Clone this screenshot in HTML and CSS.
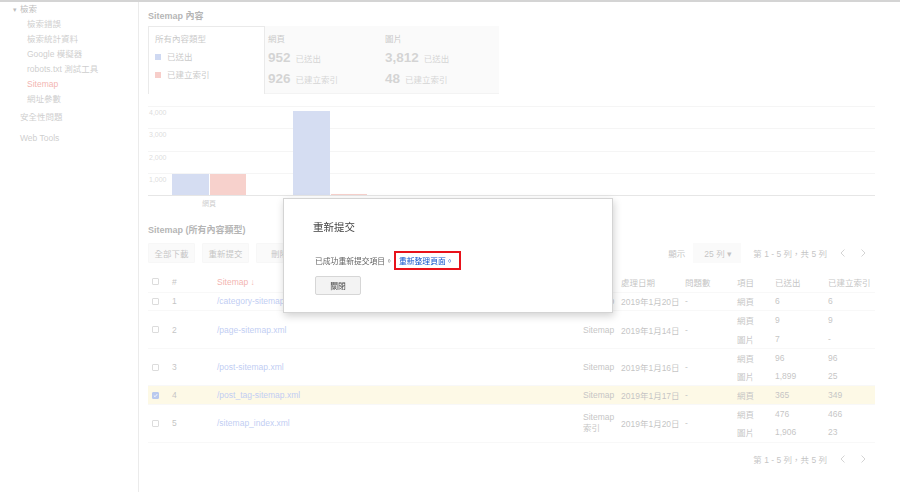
FILE: index.html
```html
<!DOCTYPE html>
<html lang="zh-Hant">
<head>
<meta charset="utf-8">
<title>Sitemap</title>
<link rel="stylesheet" href="styles.css">
</head>
<body>
<div class="topbar"></div>
<div class="layout">
  <nav class="sidebar">
    <div class="nav-head"><span class="caret">▾</span>檢索</div>
    <ul class="nav-sub">
      <li>檢索錯誤</li>
      <li>檢索統計資料</li>
      <li>Google 模擬器</li>
      <li>robots.txt 測試工具</li>
      <li class="active">Sitemap</li>
      <li>網址參數</li>
    </ul>
    <div class="nav-item">安全性問題</div>
    <div class="nav-item web">Web Tools</div>
  </nav>

  <main class="main">
    <h2 class="section-title">Sitemap 內容</h2>
    <div class="summary">
      <div class="legend">
        <div class="legend-row">所有內容類型</div>
        <div class="legend-row"><span class="swatch blue"></span>已送出</div>
        <div class="legend-row"><span class="swatch pink"></span>已建立索引</div>
      </div>
      <div class="stat">
        <div class="stat-label">網頁</div>
        <div class="stat-row"><b>952</b>已送出</div>
        <div class="stat-row"><b>926</b>已建立索引</div>
      </div>
      <div class="stat">
        <div class="stat-label">圖片</div>
        <div class="stat-row"><b>3,812</b>已送出</div>
        <div class="stat-row"><b>48</b>已建立索引</div>
      </div>
    </div>

    <div class="chart">
      <div class="gridrow"><span>4,000</span></div>
      <div class="gridrow"><span>3,000</span></div>
      <div class="gridrow"><span>2,000</span></div>
      <div class="gridrow"><span>1,000</span></div>
      <div class="bars">
        <div class="group">
          <div class="bar blue" style="height:21px"></div>
          <div class="bar pink" style="height:21px"></div>
        </div>
        <div class="group">
          <div class="bar blue" style="height:84px"></div>
          <div class="bar pink" style="height:1px"></div>
        </div>
      </div>
    </div>
    <div class="xlabels"><span>網頁</span><span>圖片</span></div>

    <h2 class="section-title second">Sitemap (所有內容類型)</h2>
    <div class="toolbar">
      <div class="actions">
        <button class="btn">全部下載</button>
        <button class="btn">重新提交</button>
        <button class="btn">刪除</button>
      </div>
      <div class="pager">
        <span class="show">顯示</span>
        <span class="select">25 列 ▾</span>
        <span class="range">第 1 - 5 列，共 5 列</span>
        <span class="chev"><svg width="5" height="8" viewBox="0 0 5 8"><path d="M4.5 0.5 L1 4 L4.5 7.5" fill="none" stroke="currentColor" stroke-width="1"/></svg></span>
        <span class="chev"><svg width="5" height="8" viewBox="0 0 5 8"><path d="M0.5 0.5 L4 4 L0.5 7.5" fill="none" stroke="currentColor" stroke-width="1"/></svg></span>
      </div>
    </div>

    <table class="sitemaps">
      <colgroup>
        <col style="width:20px"><col style="width:45px"><col style="width:366px"><col style="width:38px"><col style="width:64px"><col style="width:52px"><col style="width:38px"><col style="width:53px"><col style="width:51px">
      </colgroup>
      <thead>
        <tr>
          <th><span class="cb"></span></th>
          <th>#</th>
          <th class="sorted">Sitemap ↓</th>
          <th>類型</th>
          <th>處理日期</th>
          <th>問題數</th>
          <th>項目</th>
          <th>已送出</th>
          <th>已建立索引</th>
        </tr>
      </thead>
      <tbody>
        <tr>
          <td><span class="cb"></span></td><td>1</td><td class="link">/category-sitemap.xml</td><td>Sitemap</td><td>2019年1月20日</td><td>-</td><td>網頁</td><td>6</td><td>6</td>
        </tr>
      </tbody>
      <tbody>
        <tr>
          <td rowspan="2"><span class="cb"></span></td><td rowspan="2">2</td><td rowspan="2" class="link">/page-sitemap.xml</td><td rowspan="2">Sitemap</td><td rowspan="2">2019年1月14日</td><td rowspan="2">-</td><td>網頁</td><td>9</td><td>9</td>
        </tr>
        <tr><td>圖片</td><td>7</td><td>-</td></tr>
      </tbody>
      <tbody>
        <tr>
          <td rowspan="2"><span class="cb"></span></td><td rowspan="2">3</td><td rowspan="2" class="link">/post-sitemap.xml</td><td rowspan="2">Sitemap</td><td rowspan="2">2019年1月16日</td><td rowspan="2">-</td><td>網頁</td><td>96</td><td>96</td>
        </tr>
        <tr><td>圖片</td><td>1,899</td><td>25</td></tr>
      </tbody>
      <tbody class="selected">
        <tr>
          <td><span class="cb checked"><svg width="7" height="7" viewBox="0 0 7 7"><path d="M1.2 3.6 L2.9 5.2 L5.9 1.6" fill="none" stroke="#fff" stroke-width="1.2"/></svg></span></td><td>4</td><td class="link">/post_tag-sitemap.xml</td><td>Sitemap</td><td>2019年1月17日</td><td>-</td><td>網頁</td><td>365</td><td>349</td>
        </tr>
      </tbody>
      <tbody>
        <tr>
          <td rowspan="2"><span class="cb"></span></td><td rowspan="2">5</td><td rowspan="2" class="link">/sitemap_index.xml</td><td rowspan="2" class="two-line">Sitemap<br>索引</td><td rowspan="2">2019年1月20日</td><td rowspan="2">-</td><td>網頁</td><td>476</td><td>466</td>
        </tr>
        <tr><td>圖片</td><td>1,906</td><td>23</td></tr>
      </tbody>
    </table>

    <div class="footer-pager">
      <span class="range">第 1 - 5 列，共 5 列</span>
      <span class="chev"><svg width="5" height="8" viewBox="0 0 5 8"><path d="M4.5 0.5 L1 4 L4.5 7.5" fill="none" stroke="currentColor" stroke-width="1"/></svg></span>
      <span class="chev"><svg width="5" height="8" viewBox="0 0 5 8"><path d="M0.5 0.5 L4 4 L0.5 7.5" fill="none" stroke="currentColor" stroke-width="1"/></svg></span>
    </div>
  </main>
</div>

<div class="backdrop"></div>
<div class="modal" role="dialog">
  <div class="modal-title">重新提交</div>
  <div class="modal-msg">已成功重新提交項目。<a class="refresh" href="#">重新整理頁面。</a></div>
  <button class="modal-btn">關閉</button>
</div>
</body>
</html>
```

FILE: styles.css
```css
* { box-sizing: border-box; }

html, body {
  margin: 0;
  padding: 0;
  background: #fff;
}

body {
  font-family: "Liberation Sans", "Noto Sans CJK TC", sans-serif;
  font-size: 8.5px;
  color: #737373;
  width: 900px;
  height: 493px;
  overflow: hidden;
}

.topbar {
  height: 1px;
  border-bottom: 2px solid #9a9a9a;
}

.layout {
  display: flex;
  min-height: 490px;
}

/* Sidebar */
.sidebar {
  width: 139px;
  flex: none;
  border-right: 1px solid #cfcfcf;
  color: #8a8a8a;
}

.nav-head {
  line-height: 10px;
  padding: 2px 0 0 13px;
  color: #606060;
}

.caret {
  display: inline-block;
  width: 7px;
  font-size: 7px;
}

.nav-sub {
  list-style: none;
  margin: 2px 0 0;
  padding: 0 0 0 27px;
}

.nav-sub li {
  line-height: 15px;
}

.nav-sub li.active {
  color: #e14b41;
}

.nav-item {
  padding-left: 20px;
  line-height: 15px;
  margin-top: 3px;
}

.nav-item.web {
  margin-top: 6px;
}

/* Main */
.main {
  flex: 1;
  padding: 0 25px 0 9px;
}

.section-title {
  margin: 8px 0 0;
  font-size: 9px;
  font-weight: bold;
  line-height: 12px;
  color: #4f4f4f;
}

.section-title.second {
  margin-top: 14px;
}

.summary {
  display: flex;
  margin-top: 4px;
  height: 68px;
}

.legend {
  width: 117px;
  border: 1px solid #cdcdcd;
  border-bottom: none;
  padding: 3px 0 0 6px;
  background: #fff;
  color: #7d7d7d;
}

.legend-row {
  line-height: 18px;
  display: flex;
  align-items: center;
}

.swatch {
  width: 6px;
  height: 6px;
  margin-right: 6px;
}

.swatch.blue { background: #8ea4df; }
.swatch.pink { background: #eb8a80; }

.stat {
  width: 117px;
  background: #f3f3f3;
  border-bottom: 1px solid #e3e3e3;
  padding: 4px 0 0 3px;
  color: #7d7d7d;
}

.stat-label {
  line-height: 18px;
}

.stat-row {
  line-height: 20px;
  color: #9a9a9a;
}

.stat-row b {
  font-size: 13.5px;
  color: #9a9a9a;
  margin-right: 5px;
}

/* Chart */
.chart {
  position: relative;
  margin-top: 12px;
  border-bottom: 1px solid #c3c3c3;
}

.gridrow {
  height: 22.25px;
  border-top: 1px solid #e8e8e8;
  padding: 1px 0 0 1px;
  font-size: 7px;
  line-height: 10px;
  color: #acacac;
}

.bars {
  position: absolute;
  left: 0;
  right: 0;
  bottom: 0;
  height: 100%;
  display: flex;
  align-items: flex-end;
  padding-left: 24px;
  gap: 47px;
}

.group {
  display: flex;
  align-items: flex-end;
  gap: 1px;
}

.bar { width: 37px; }
.bar.pink { width: 36px; }
.bar.blue { background: #9bafe1; }
.bar.pink { background: #eb9187; }

.xlabels {
  display: flex;
  padding-left: 24px;
  gap: 47px;
  margin-top: 2px;
  line-height: 12px;
  font-size: 7px;
  color: #8a8a8a;
}

.xlabels span {
  width: 74px;
  text-align: center;
}

/* Toolbar */
.toolbar {
  display: flex;
  justify-content: space-between;
  align-items: center;
  margin-top: 7px;
  height: 20px;
}

.actions {
  display: flex;
  gap: 7px;
}

.btn {
  font: inherit;
  color: #737373;
  height: 20px;
  width: 47px;
  padding: 0;
  background: #f3f3f3;
  border: 1px solid #ececec;
  border-radius: 1px;
}

.pager {
  display: flex;
  align-items: center;
  height: 20px;
  padding-right: 4px;
}

.show {
  margin-right: 8px;
}

.select {
  display: flex;
  align-items: center;
  height: 20px;
  width: 48px;
  padding-left: 11px;
  background: #f3f3f3;
  margin-right: 12px;
}

.range {
  margin-right: 2px;
}

.chev {
  display: flex;
  align-items: center;
  justify-content: center;
  width: 16px;
  height: 16px;
  color: #9a9a9a;
  margin-left: 5px;
}

/* Table */
.sitemaps {
  width: 727px;
  border-collapse: collapse;
  table-layout: fixed;
  margin-top: 9px;
}

.sitemaps th,
.sitemaps td {
  padding: 0 0 0 4px;
  text-align: left;
  font-weight: normal;
  white-space: nowrap;
  overflow: hidden;
  vertical-align: middle;
}

.sitemaps th {
  height: 20px;
  border-bottom: 1px solid #eeeeee;
}

.sitemaps td {
  height: 18.75px;
}

.sitemaps tbody {
  border-bottom: 1px solid #eeeeee;
}

.sitemaps th.sorted {
  color: #e14b41;
}

.sitemaps td.link {
  color: #6987e1;
}

.sitemaps td.two-line {
  line-height: 11px;
}

.sitemaps tbody.selected {
  background: #fbf0c4;
}

.cb {
  display: flex;
  align-items: center;
  justify-content: center;
  width: 7px;
  height: 7px;
  border: 1px solid #adadad;
  border-radius: 1px;
  background: #fff;
}

.cb.checked {
  background: #5a7fd6;
  border-color: #5a7fd6;
}

.footer-pager {
  display: flex;
  justify-content: flex-end;
  align-items: center;
  margin-top: 9px;
  height: 14px;
  padding-right: 4px;
}

/* Modal */
.backdrop {
  position: fixed;
  inset: 0;
  background: rgba(255, 255, 255, 0.58);
}

.modal {
  position: fixed;
  left: 283px;
  top: 198px;
  width: 330px;
  height: 115px;
  background: #fff;
  border: 1px solid #d4d4d4;
  box-shadow: 1px 3px 8px rgba(0, 0, 0, 0.18);
  padding: 21px 0 0 31px;
  color: #555;
}

.modal-title {
  font-size: 10.5px;
  line-height: 14px;
  color: #444;
  margin-left: -2px;
}

.modal-msg {
  display: flex;
  align-items: center;
  margin-top: 17px;
  height: 19px;
  font-size: 7.8px;
  color: #666;
}

.refresh {
  display: inline-flex;
  align-items: center;
  height: 19px;
  border: 2px solid #e8121b;
  margin-left: 1px;
  padding: 0 5px 0 3px;
  color: #1155cc;
  text-decoration: none;
}

.modal-btn {
  display: block;
  margin-top: 6px;
  width: 46px;
  height: 19px;
  padding: 0;
  font: inherit;
  font-size: 7.8px;
  color: #444;
  background: #f3f3f3;
  border: 1px solid #d6d6d6;
  border-radius: 2px;
}
```
